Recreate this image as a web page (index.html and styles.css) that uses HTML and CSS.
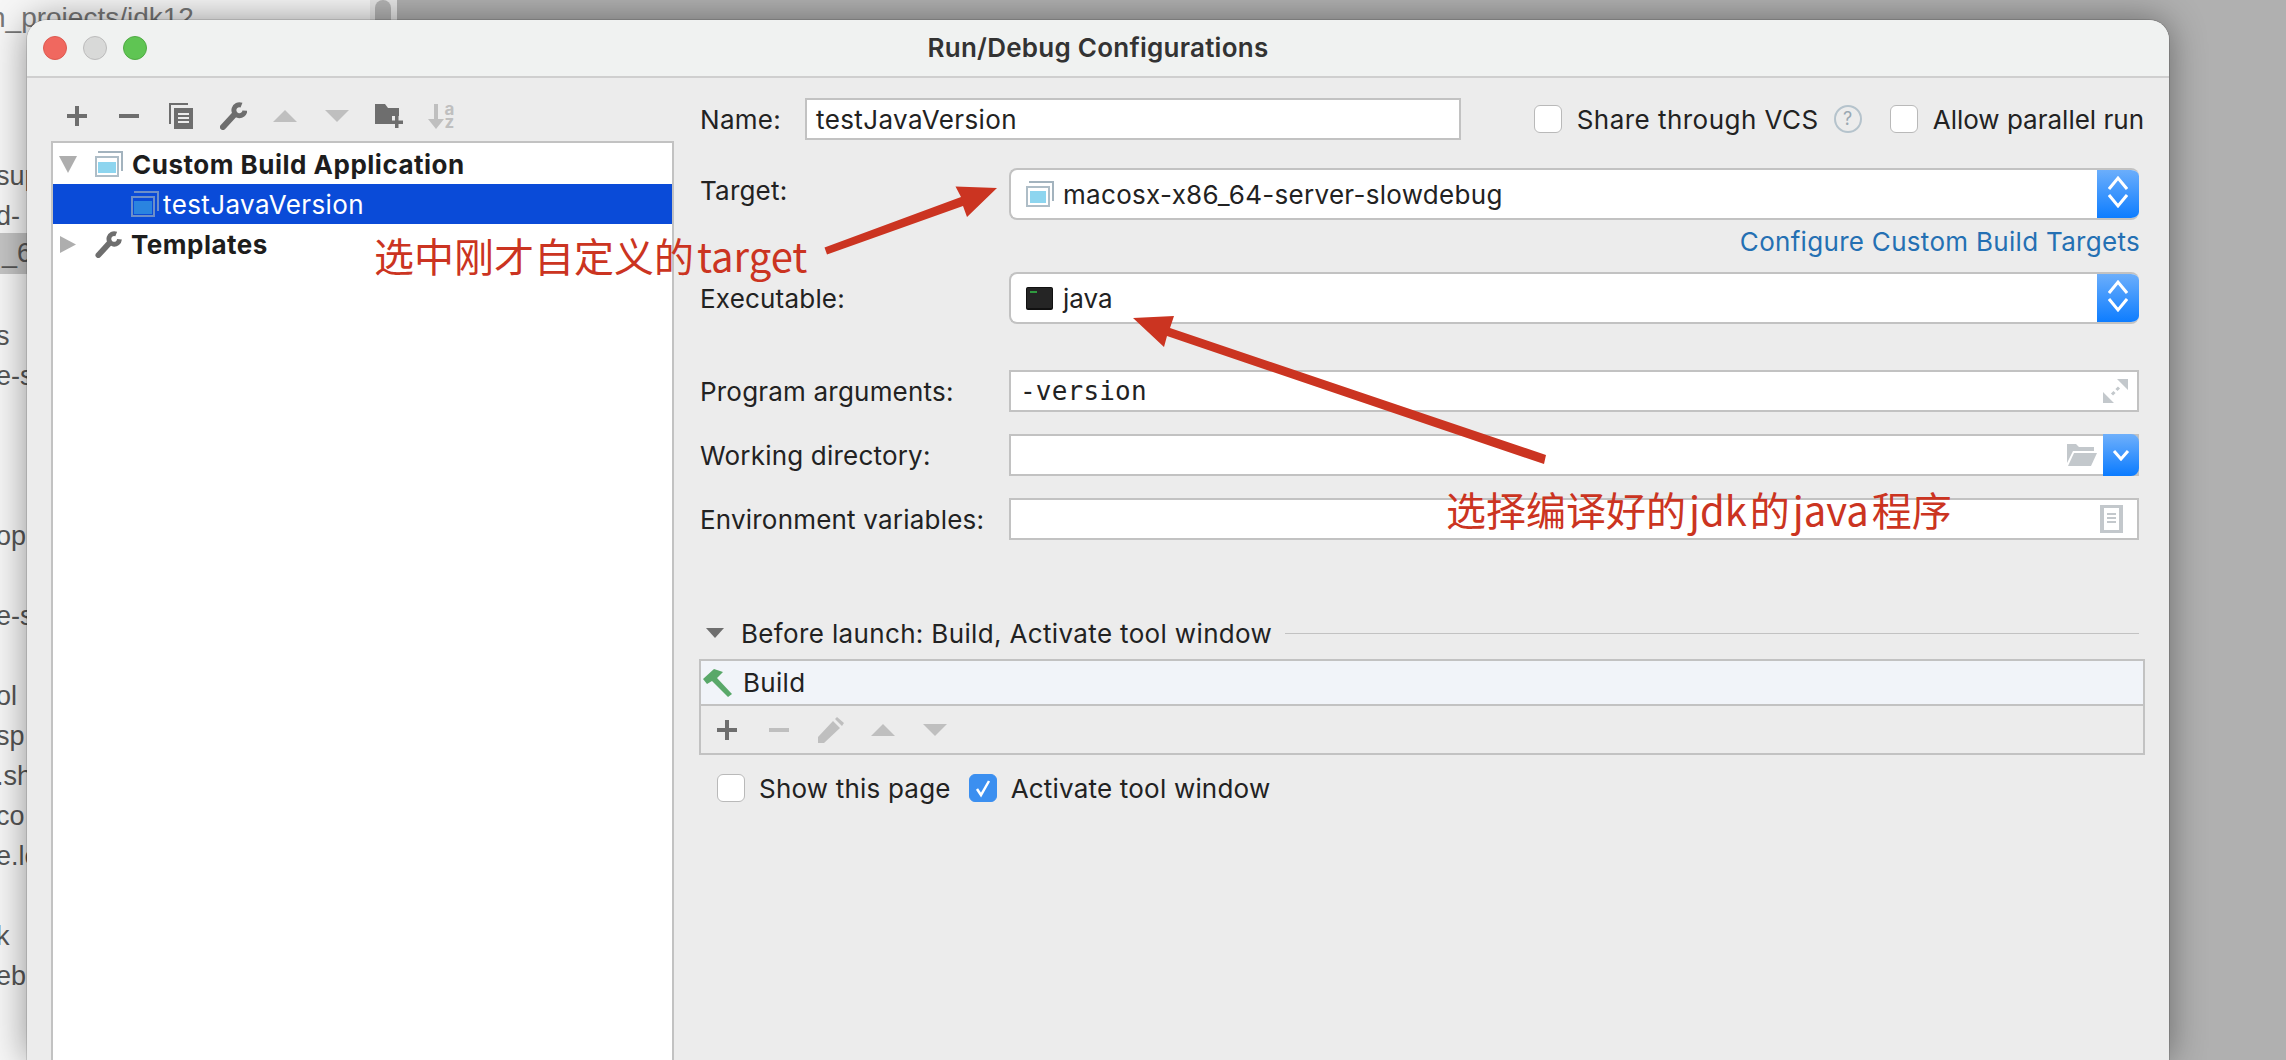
FILE: index.html
```html
<!DOCTYPE html>
<html lang="en">
<head>
<meta charset="utf-8">
<title>Run/Debug Configurations</title>
<link rel="stylesheet" href="styles.css">
</head>
<body>
<div class="desktop">
  <div class="ide-panel">
    <div class="ide-path">n_projects/jdk12</div>
    <div class="ide-scroll"><div class="ide-thumb"></div></div>
    <ul class="ide-files">
      <li>sup</li><li>d-</li><li class="ide-sel">_6</li><li></li><li>s</li><li>e-s</li><li></li><li></li><li></li>
      <li>op</li><li></li><li>e-s</li><li></li><li>ol</li><li>sp</li><li>.sh</li><li>co</li><li>e.lo</li><li></li><li>k</li><li>eb</li>
    </ul>
  </div>
  <div class="ide-rest"></div>
</div>

<section class="window">
  <header class="titlebar">
    <div class="lights"><i class="light red"></i><i class="light gray"></i><i class="light green"></i></div>
    <h1 class="title">Run/Debug Configurations</h1>
  </header>
  <div class="content">
    <aside class="left">
      <div class="toolbar">
        <span class="slot"><svg width="20" height="20" viewBox="0 0 20 20"><path class="ic" d="M8 0h4v8h8v4h-8v8H8v-8H0V8h8z"/></svg></span>
        <span class="slot"><svg width="20" height="4" viewBox="0 0 20 4"><path class="ic" d="M0 0h20v4H0z"/></svg></span>
        <span class="slot"><svg width="24" height="26" viewBox="0 0 24 26"><path class="ic" d="M0 0h19v2H2v19H0z"/><path class="ic" d="M5 5h19v21H5z"/><path class="cut" d="M9 10h11v2H9zM9 14h11v2H9zM9 18h11v2H9z"/></svg></span>
        <span class="slot"><svg width="27" height="28" viewBox="0 0 27 28"><path class="ic-line wrench-handle" d="M3 25 14.500 12.500"/><path class="ic-line wrench-head" d="M21.500 3.100A5.500 5.500 0 1 0 24.900 8.600"/></svg></span>
        <span class="slot"><svg width="24" height="12" viewBox="0 0 24 12"><path class="dim" d="M12 0 24 12H0z"/></svg></span>
        <span class="slot"><svg width="24" height="12" viewBox="0 0 24 12"><path class="dim" d="M0 0h24L12 12z"/></svg></span>
        <span class="slot"><svg width="28" height="24" viewBox="0 0 28 24"><path class="ic" d="M0 0h10l3 4h11v8h-7v8H0z"/><path class="ic" d="M20 12h3.500v4.500H28V20h-4.500v4H20v-4h-4.500v-3.500H20z"/></svg></span>
        <span class="slot sort"><svg width="16" height="25" viewBox="0 0 16 25"><path class="dim" d="M6 0h4v15h6L8 25 0 15h6z"/></svg><span class="sort-letters"><b>a</b><b>z</b></span></span>
      </div>
      <div class="tree">
        <div class="tree-row group">
          <svg class="tw" width="18" height="17" viewBox="0 0 18 17"><path class="tri" d="M0 0h18L9 17z"/></svg>
          <svg class="stack" width="28" height="26" viewBox="0 0 28 26"><path class="st-back" d="M3 0h25v20h-2V2H3z"/><path class="st-frame" d="M0 5h24v21H0z"/><path class="st-gap" d="M2 7h20v17H2z"/><path class="st-fill" d="M3 11h18v11H3z"/></svg>
          <span class="tree-label">Custom Build Application</span>
        </div>
        <div class="tree-row selected">
          <svg class="stack" width="28" height="26" viewBox="0 0 28 26"><path class="st-back" d="M3 0h25v20h-2V2H3z"/><path class="st-frame" d="M0 5h24v21H0z"/><path class="st-gap" d="M2 7h20v17H2z"/><path class="st-fill" d="M3 10h18v13H3z"/></svg>
          <span class="tree-label">testJavaVersion</span>
        </div>
        <div class="tree-row group">
          <svg class="tw" width="16" height="17" viewBox="0 0 16 17"><path class="tri" d="M0 0l16 8.500L0 17z"/></svg>
          <svg class="stack" width="27" height="27" viewBox="0 0 27 28"><path class="ic-line wrench-handle" d="M3 25 14.500 12.500"/><path class="ic-line wrench-head" d="M21.500 3.100A5.500 5.500 0 1 0 24.900 8.600"/></svg>
          <span class="tree-label">Templates</span>
        </div>
      </div>
    </aside>

    <main class="right">
      <div class="name-row">
        <label class="name-label">Name:</label>
        <div class="input name-input">testJavaVersion</div>
        <div class="opts">
          <span class="check"></span><span class="opt-text opt-share">Share through VCS</span>
          <span class="help">?</span>
          <span class="check"></span><span class="opt-text opt-allow">Allow parallel run</span>
        </div>
      </div>

      <div class="field-row target-row">
        <label class="field-label raised">Target:</label>
        <div class="combo">
          <svg class="combo-icon" width="28" height="26" viewBox="0 0 28 26"><path class="st-back" d="M3 0h25v20h-2V2H3z"/><path class="st-frame" d="M0 5h24v21H0z"/><path class="st-gap" d="M2 7h20v17H2z"/><path class="st-fill" d="M4 10h16v12H4z"/></svg>
          <span class="combo-text">macosx-x86_64-server-slowdebug</span>
          <span class="stepper"><svg width="20" height="44" viewBox="0 0 20 44"><path class="chev" d="M1 17 10 6l9 11M1 23l9 11 9-11"/></svg></span>
        </div>
      </div>
      <div class="link-row"><a class="link">Configure Custom Build Targets</a></div>

      <div class="field-row">
        <label class="field-label">Executable:</label>
        <div class="combo">
          <span class="term"><i class="term-dots"></i></span>
          <span class="combo-text exe">java</span>
          <span class="stepper"><svg width="20" height="44" viewBox="0 0 20 44"><path class="chev" d="M1 17 10 6l9 11M1 23l9 11 9-11"/></svg></span>
        </div>
      </div>

      <div class="field-row args-row">
        <label class="field-label">Program arguments:</label>
        <div class="input wide mono">-version
          <svg class="trail" width="25" height="24" viewBox="0 0 25 24"><path class="soft" d="M14 0h11v11zM0 24V13l11 11z"/><path class="soft-line" d="M9 15.500l2.500-2.500M13.500 11l2.500-2.500"/></svg>
        </div>
      </div>
      <div class="field-row gap-row">
        <label class="field-label">Working directory:</label>
        <div class="input wide dir">
          <svg class="trail folder" width="30" height="22" viewBox="0 0 30 22"><path class="soft" d="M0 0h9l3 3h15v4H6L0 19z"/><path class="soft" d="M7 9h23l-6 13H1z"/></svg>
          <span class="drop"><svg width="18" height="12" viewBox="0 0 18 12"><path class="chev" d="M2 2l7 8 7-8"/></svg></span>
        </div>
      </div>
      <div class="field-row gap-row">
        <label class="field-label">Environment variables:</label>
        <div class="input wide">
          <svg class="trail doc" width="23" height="28" viewBox="0 0 23 28"><path class="soft" d="M0 0h23v28H0z"/><path class="blank" d="M4 3h15v22H4z"/><path class="soft" d="M7 8h9v2H7zM7 12h9v2H7zM7 16h9v2H7z"/></svg>
        </div>
      </div>

      <div class="before-head">
        <svg width="18" height="10" viewBox="0 0 18 10"><path class="ic" d="M0 0h18L9 10z"/></svg>
        <span class="before-text">Before launch: Build, Activate tool window</span>
        <span class="before-line"></span>
      </div>
      <div class="before-box">
        <div class="before-row">
          <svg class="hammer" width="30" height="28" viewBox="0 0 30 28"><path class="green" d="M0 10 11 0l9 3-6 6 15 16-4 3L9 12l-5 3z"/></svg>
          <span class="before-item">Build</span>
        </div>
        <div class="before-tools">
          <span class="slot"><svg width="20" height="20" viewBox="0 0 20 20"><path class="ic" d="M8 0h4v8h8v4h-8v8H8v-8H0V8h8z"/></svg></span>
          <span class="slot"><svg width="20" height="4" viewBox="0 0 20 4"><path class="dim" d="M0 0h20v4H0z"/></svg></span>
          <span class="slot"><svg width="26" height="26" viewBox="0 0 26 26"><path class="dim" d="M0 20 15 4l7 7L6 26H0zM17 2l2-2 7 6-2 3z"/></svg></span>
          <span class="slot"><svg width="24" height="12" viewBox="0 0 24 12"><path class="dim" d="M12 0 24 12H0z"/></svg></span>
          <span class="slot"><svg width="24" height="12" viewBox="0 0 24 12"><path class="dim" d="M0 0h24L12 12z"/></svg></span>
        </div>
      </div>
      <div class="after-row">
        <span class="check"></span><span class="opt-text">Show this page</span>
        <span class="check on"><svg width="20" height="20" viewBox="0 0 20 20"><path class="tick" d="M4 11l4 6 8-14"/></svg></span><span class="opt-text">Activate tool window</span>
      </div>
    </main>
  </div>
</section>

<svg class="arrows" width="2286" height="1060" viewBox="0 0 2286 1060">
  <path class="arrow" d="M824.500 247.500 961 197l-5.500-10.500L997 188l-30 29-4-11-136 48.500z"/>
  <path class="arrow" d="M1133 318l41-2-4 12 376 127-2 9-377-128-3 11z"/>
</svg>
<div class="note note-a">选中刚才自定义的 target</div>
<div class="note note-b">选择编译好的 jdk 的 java 程序</div>
</body>
</html>
```
FILE: styles.css
```css
* { box-sizing: border-box; }
html, body { margin: 0; padding: 0; width: 2286px; height: 1060px; overflow: hidden; }
body { font-family: Inter, "Liberation Sans", sans-serif; font-size: 26px; letter-spacing: .3px; color: #222; position: relative; }

/* backdrop */
.desktop { display: flex; width: 2286px; height: 1060px; }
.ide-panel { width: 397px; height: 1060px; background: #f6f6f6; position: relative; font-family: "Liberation Sans", sans-serif; font-size: 27px; letter-spacing: 0; color: #555; }
.ide-rest { flex: 1; background: #b0b0b0; }
.ide-path { position: absolute; left: -10px; top: 2px; line-height: 32px; font-size: 28px; color: #777; }
.ide-scroll { position: absolute; left: 370px; top: 0; width: 27px; height: 30px; background: #e6e6e6; }
.ide-thumb { width: 16px; height: 30px; margin-left: 5px; background: #b4b4b4; border-radius: 8px; }
.ide-files { list-style: none; margin: 0; padding: 156px 0 0; }
.ide-files li { height: 40px; line-height: 40px; padding-left: 0; white-space: nowrap; text-indent: -4px; overflow: hidden; }
.ide-files .ide-sel { background: #c4c4c4; margin-top: -3px; margin-bottom: 2px; height: 41px; text-indent: 2px; }

/* window */
.window { position: absolute; left: 27px; top: 20px; width: 2142px; height: 1040px; background: #ececec; border-radius: 20px 20px 0 0; box-shadow: 0 0 36px rgba(0,0,0,.42), 0 0 0 1px rgba(0,0,0,.12); display: flex; flex-direction: column; overflow: visible; }
.titlebar { height: 58px; padding-bottom: 2px; background: #f0f2f1; border-bottom: 2px solid #cfcfcf; border-radius: 20px 20px 0 0; display: flex; align-items: center; justify-content: center; position: relative; }
.title { margin: 0; font-size: 26px; font-weight: 600; color: #333; letter-spacing: .25px; }
.lights { position: absolute; left: 16px; top: 16px; display: flex; gap: 16px; }
.light { width: 24px; height: 24px; border-radius: 50%; display: block; }
.red { background: #f0685f; border: 1px solid #dd5a50; }
.gray { background: #d8d9d8; border: 1px solid #bcbcbc; }
.green { background: #5fc553; border: 1px solid #50ab44; }

.content { flex: 1; display: flex; min-height: 0; }
.left { width: 647px; padding-left: 24px; display: flex; flex-direction: column; }
.toolbar { height: 63px; padding-top: 24px; display: flex; align-items: flex-start; }
.slot { width: 52px; height: 28px; display: flex; align-items: center; justify-content: center; flex: none; }
.ic { fill: #6e6e6e; }
.ic-line { fill: none; stroke: #6e6e6e; }
.wrench-handle { stroke-width: 6; stroke-linecap: round; }
.wrench-head { stroke-width: 5; }
.cut { fill: #ececec; }
.dim { fill: #bfbfbf; }
.sort { gap: 1px; }
.sort-letters { display: flex; flex-direction: column; font-size: 17px; line-height: 13px; letter-spacing: 0; color: #bfbfbf; }
.sort-letters b { display: block; font-weight: 700; }

.tree { flex: 1; background: #fff; border: 2px solid #c2c2c2; border-bottom: 0; padding-top: 1px; }
.tree-row { height: 40px; display: flex; align-items: center; padding-left: 6px; }
.tw { flex: none; width: 18px; }
.stack { margin-left: 18px; flex: none; }
.tree-label { margin-left: 9px; }
.group .tree-label { font-weight: 700; color: #1d1d1d; letter-spacing: .5px; }
.selected { background: #0a4bd8; padding-left: 78px; }
.selected .stack { margin-left: 0; }
.selected .tree-label { margin-left: 4px; color: #fff; letter-spacing: .4px; }
.tri { fill: #aeaeae; }
.st-back { fill: #a3b3be; }
.st-frame { fill: #aebdc7; }
.st-gap { fill: #fff; }
.st-fill { fill: #8dd5ef; }
.selected .st-back, .selected .st-frame { fill: #6d8fc8; }
.selected .st-gap { fill: #0a4bd8; }
.selected .st-fill { fill: #2a84e0; }

.right { flex: 1; padding: 20px 25px 0 26px; min-width: 0; }
.name-row { display: flex; align-items: center; height: 42px; }
.name-label { width: 105px; flex: none; }
.input { height: 42px; background: #fff; border: 2px solid #c2c2c2; display: flex; align-items: center; padding-left: 9px; position: relative; }
.name-input { width: 656px; flex: none; letter-spacing: .4px; }
.opts { margin-left: auto; display: flex; align-items: center; }
.check { width: 28px; height: 28px; flex: none; background: #fff; border: 1px solid #b9b9b9; border-radius: 6px; display: flex; align-items: center; justify-content: center; }
.check.on { background: #3b8ff0; border-color: #3b8ff0; margin-left: 18px; }
.tick { fill: none; stroke: #fff; stroke-width: 2.5; }
.opt-text { margin-left: 15px; white-space: nowrap; }
.opt-share { letter-spacing: .47px; }
.opt-allow { letter-spacing: 0; }
.help { width: 28px; height: 28px; border: 2px solid #b5c3cc; border-radius: 50%; margin: 0 28px 0 15px; font-size: 18px; line-height: 24px; letter-spacing: 0; text-align: center; color: #9aa8b2; }

.field-row { display: flex; align-items: center; margin-right: 5px; }
.field-label { width: 309px; flex: none; white-space: nowrap; letter-spacing: .2px; }
.raised { padding-bottom: 7px; }
.target-row { margin-top: 28px; }
.combo { flex: 1; height: 52px; background: #fff; border: 2px solid #c2c2c2; border-right: 0; border-radius: 8px; display: flex; align-items: center; padding-left: 15px; overflow: hidden; }
.combo-icon { flex: none; }
.combo-text { margin-left: 9px; flex: 1; }
.combo-text.exe { margin-left: 10px; letter-spacing: 0; }
.stepper { width: 42px; height: 52px; margin: -2px 0; background: linear-gradient(#6fb0fb, #0a7bff); display: flex; align-items: center; justify-content: center; }
.chev { fill: none; stroke: #fff; stroke-width: 3; }
.link-row { height: 42px; margin-bottom: 10px; display: flex; align-items: center; justify-content: flex-end; margin-right: 4px; }
.link { color: #2470b3; }
.term { width: 27px; height: 23px; background: #252525; border: 1px solid #111; border-bottom-width: 2px; border-radius: 2px; display: block; position: relative; flex: none; }
.term-dots { position: absolute; left: 3px; top: 3px; width: 7px; height: 2px; background: #2f9a3f; }
.args-row { margin-top: 46px; }
.gap-row { margin-top: 22px; }
.wide { flex: 1; }
.mono { font-family: "DejaVu Sans Mono", monospace; font-size: 26px; letter-spacing: .2px; }
.trail { position: absolute; right: 9px; top: 50%; transform: translateY(-50%); }
.folder { right: 40px; }
.doc { right: 14px; }
.soft { fill: #c3c8cc; }
.soft-line { fill: none; stroke: #c3c8cc; stroke-width: 3; }
.blank { fill: #fff; }
.drop { position: absolute; right: -2px; top: -2px; width: 36px; height: 42px; background: linear-gradient(#6fb0fb, #0a7bff); border-radius: 0 8px 8px 0; display: flex; align-items: center; justify-content: center; }

.before-head { height: 40px; margin-top: 73px; margin-right: 5px; padding-left: 6px; display: flex; align-items: center; }
.before-text { margin-left: 17px; white-space: nowrap; letter-spacing: .35px; }
.before-line { flex: 1; height: 1px; margin-left: 13px; background: #c2c2c2; }
.before-box { margin: 6px -1px 0 -1px; border: 2px solid #c2c2c2; height: 96px; }
.before-row { height: 43px; background: #f1f4f9; border-bottom: 0; display: flex; align-items: center; padding-left: 2px; }
.hammer { flex: none; }
.before-item { margin-left: 10px; }
.before-tools { height: 49px; border-top: 2px solid #c2c2c2; display: flex; align-items: center; }
.green { fill: #59a869; }
.after-row { margin: 19px 0 0 17px; display: flex; align-items: center; height: 28px; letter-spacing: .2px; }
.after-row .opt-text { margin-left: 14px; }

/* annotations */
.arrows { position: absolute; left: 0; top: 0; pointer-events: none; }
.arrow { fill: #cb3421; }
.note { position: absolute; font-family: "Noto Sans CJK SC", "Noto Sans", sans-serif; font-size: 40px; line-height: 50px; letter-spacing: 0; word-spacing: -6px; color: #cb3421; white-space: nowrap; }
.note-a { left: 374px; top: 230px; }
.note-b { left: 1446px; top: 484px; }
```
